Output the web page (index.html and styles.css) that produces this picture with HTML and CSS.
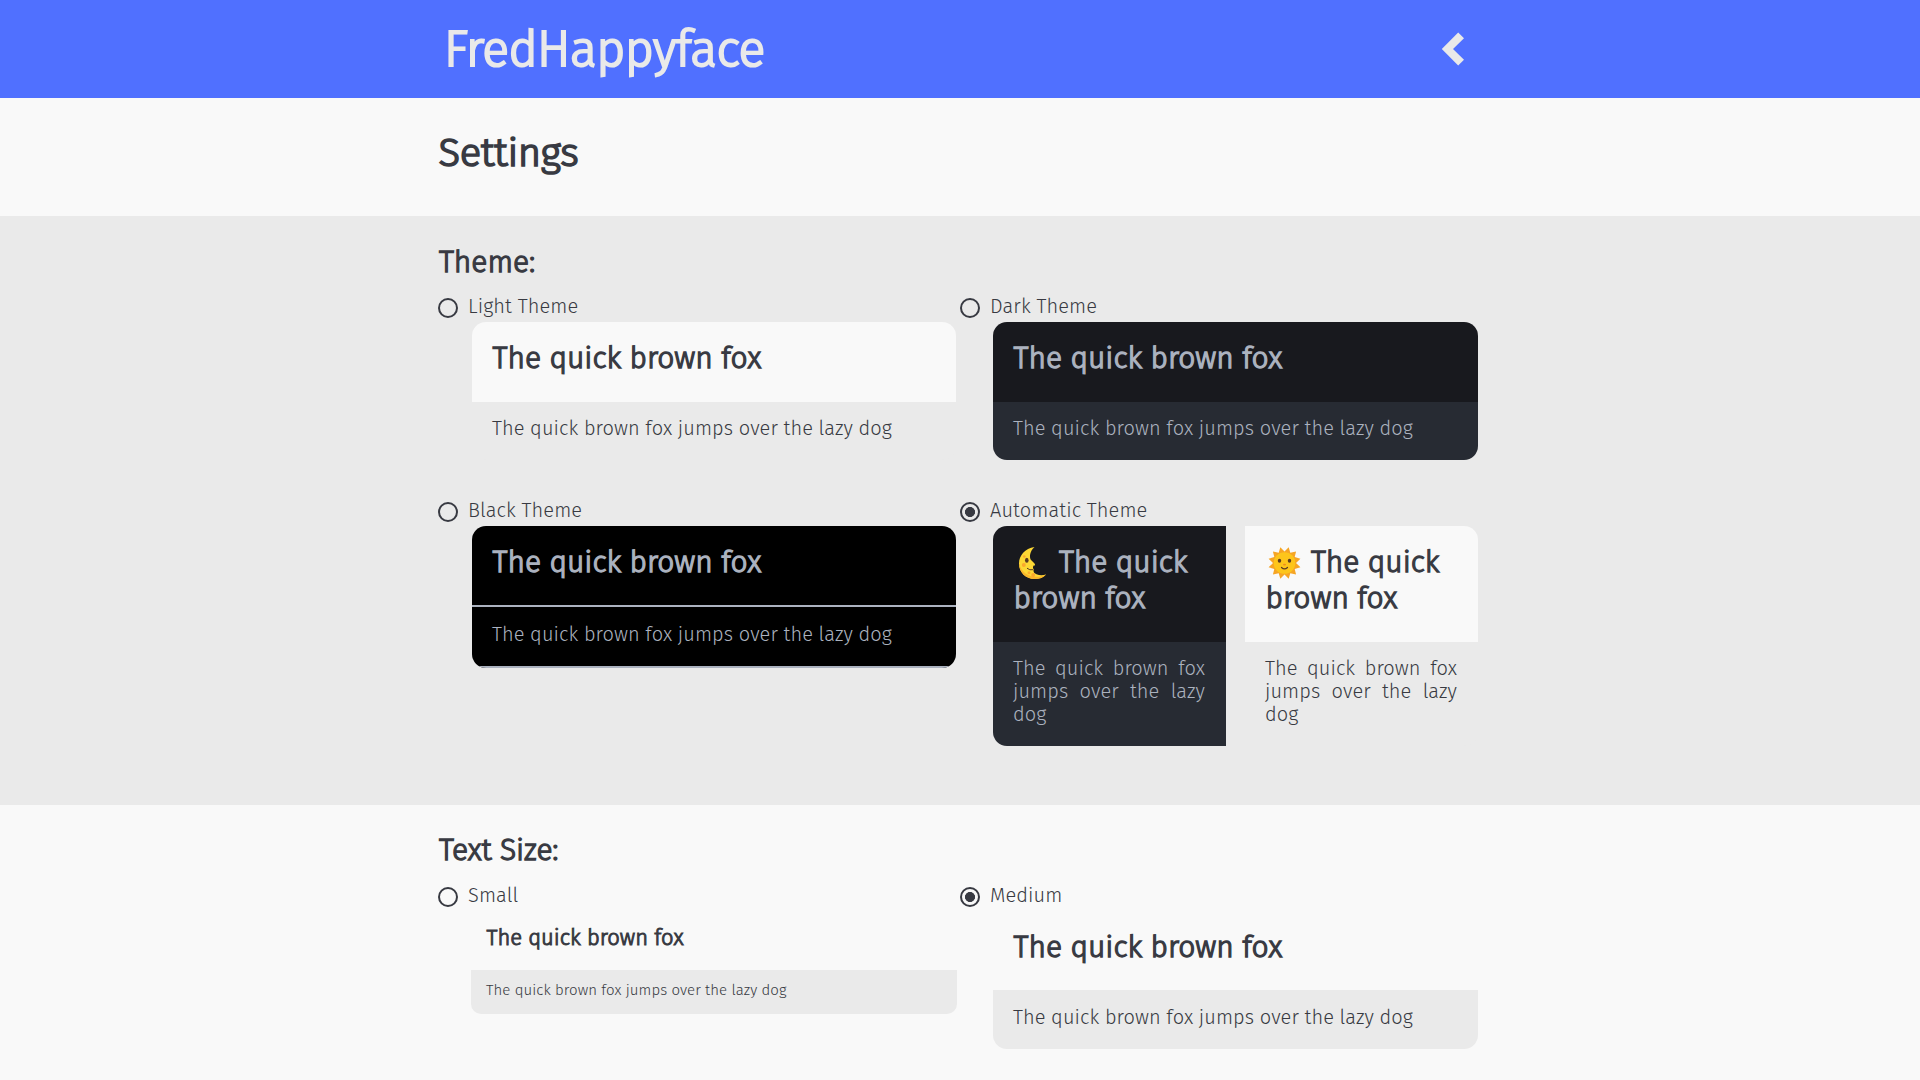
FILE: index.html
```html
<!DOCTYPE html>
<html lang="en">
<head>
<meta charset="utf-8">
<title>Settings - FredHappyface</title>
<link rel="stylesheet" href="styles.css">
</head>
<body>
<header class="topbar">
  <div class="container topbar-inner">
    <a class="brand">FredHappyface</a>
    <svg class="chevron" width="24" height="36" viewBox="0 0 24 36"><path d="M0.8 18 17.2 1.5 23 7.2 12 18 23 28.8 17.2 34.5Z"/></svg>
  </div>
</header>
<section class="section title-section">
  <div class="container"><h1>Settings</h1></div>
</section>
<section class="section alt theme-section">
  <div class="container">
    <h2>Theme:</h2>
    <div class="options">
      <div class="option">
        <label class="choice"><span class="radio"></span>Light Theme</label>
        <div class="card light">
          <div class="card-head">The quick brown fox</div>
          <p class="card-body">The quick brown fox jumps over the lazy dog</p>
        </div>
      </div>
      <div class="option">
        <label class="choice"><span class="radio"></span>Dark Theme</label>
        <div class="card dark">
          <div class="card-head">The quick brown fox</div>
          <p class="card-body">The quick brown fox jumps over the lazy dog</p>
        </div>
      </div>
      <div class="option">
        <label class="choice"><span class="radio"></span>Black Theme</label>
        <div class="card black">
          <div class="card-head">The quick brown fox</div>
          <p class="card-body">The quick brown fox jumps over the lazy dog</p>
        </div>
      </div>
      <div class="option">
        <label class="choice"><span class="radio checked"></span>Automatic Theme</label>
        <div class="split">
          <div class="card dark left">
            <div class="card-head"><svg class="emoji" width="37" height="36" viewBox="0 0 37 36">
                <path fill="#fdd835" d="M20.500 3C11 4.500 5 11.500 5 19.500C5 28.500 12 35 20.500 35C25.500 35 29.500 33.500 32 30.500C29 31.500 25.500 31.500 22.500 30.300C20.500 29.500 19.300 28 19.500 26.500C20 25.600 20 25 19 24.600C18.800 23.500 19 22.500 19.600 21.600C20.500 21.700 21.300 21.200 21 20.400C20.500 19 18.300 17.500 17 16C15.200 13.500 15.500 7.500 20.500 3Z"/>
                <path fill="#f9b52b" d="M5 19.500C5 28.500 12 35 20.500 35C25.500 35 29.500 33.500 32 30.500C21 36 8 31.500 5 19.500Z"/>
                <g fill="#fba92c"><circle cx="9.800" cy="21" r="2"/><circle cx="15" cy="28.800" r="1.500"/><circle cx="19.200" cy="31" r="2"/><circle cx="10.300" cy="12.500" r="1.300"/></g>
                <ellipse cx="12.800" cy="16.200" rx="1.800" ry="2.500" fill="#5a3b22"/>
                <path fill="none" stroke="#5a3b22" stroke-width="1" d="M13 24.200Q15.500 26.500 19.300 25.700"/>
              </svg> The quick brown fox</div>
            <p class="card-body">The quick brown fox jumps over the lazy dog</p>
          </div>
          <div class="card light right">
            <div class="card-head"><svg class="emoji" width="37" height="36" viewBox="0 0 37 36">
                <path fill="#f6a525" d="M18.500 7.500 22.700 3.200 24.300 8.800 30.100 7.400 28.700 13.100 34.400 14.700 30 19 34.400 23.300 28.700 24.900 30.100 30.600 24.300 29.200 22.700 34.800 18.500 30.500 14.300 34.800 12.700 29.200 6.900 30.600 8.300 24.900 2.600 23.300 7 19 2.600 14.700 8.300 13.100 6.900 7.400 12.700 8.800 14.300 3.200Z"/>
                <circle cx="18.500" cy="19" r="10.800" fill="#fdc51b"/>
                <ellipse cx="13.500" cy="16.700" rx="1.700" ry="2" fill="#5a3b22"/><ellipse cx="23.500" cy="16.700" rx="1.700" ry="2" fill="#5a3b22"/>
                <ellipse cx="18.500" cy="20.600" rx="1.500" ry=".9" fill="#ef8b1f"/>
                <path fill="none" stroke="#5a3b22" stroke-width="1.200" stroke-linecap="round" d="M15.500 23.500Q18.500 26.300 21.500 23.500"/>
              </svg> The quick brown fox</div>
            <p class="card-body">The quick brown fox jumps over the lazy dog</p>
          </div>
        </div>
      </div>
    </div>
  </div>
</section>
<section class="section size-section">
  <div class="container">
    <h2>Text Size:</h2>
    <div class="options">
      <div class="option">
        <label class="choice"><span class="radio"></span>Small</label>
        <div class="card light small">
          <div class="card-head">The quick brown fox</div>
          <p class="card-body">The quick brown fox jumps over the lazy dog</p>
        </div>
      </div>
      <div class="option">
        <label class="choice"><span class="radio checked"></span>Medium</label>
        <div class="card light medium">
          <div class="card-head">The quick brown fox</div>
          <p class="card-body">The quick brown fox jumps over the lazy dog</p>
        </div>
      </div>
    </div>
  </div>
</section>
</body>
</html>
```
FILE: styles.css
```css
* { box-sizing: border-box; margin: 0; padding: 0; }

html { overflow: hidden; }

body {
  height: 1080px;
  overflow: hidden;
  background: #f9f9f9;
  color: #383a42;
  font-family: "Fira Sans", "Open Sans", sans-serif;
  font-size: 20px;
  font-weight: 300;
  line-height: 23px;
  letter-spacing: 0.06px;
}

.container { width: 1044px; margin: 0 auto; padding-right: 4px; }

.topbar { height: 98px; background: #5070ff; color: #e9e9e9; }
.topbar-inner { display: flex; justify-content: space-between; padding: 19px 17px 0 6px; }
.brand {
  font-size: 50px;
  line-height: 60px;
  letter-spacing: -0.6px;
  -webkit-text-stroke: 2.1px currentColor;
}
.chevron { margin-top: 11.5px; fill: #e9e9e9; }

h1, h2, .card-head { font-weight: 300; }
h1 { font-size: 40px; line-height: 48px; letter-spacing: -0.35px; -webkit-text-stroke: 1.7px currentColor; }
h2, .card-head { font-size: 30px; line-height: 36px; letter-spacing: 0; -webkit-text-stroke: 1.3px currentColor; }
h1 { padding-left: 0.5px; }
h2 { padding-left: 1px; }

.title-section { height: 118px; padding-top: 31px; }
.alt { background: #eaeaea; }
.theme-section { height: 589px; padding-top: 28px; }
.theme-section h2 { margin-bottom: 14px; }
.size-section { padding-top: 27px; }
.size-section h2 { margin-bottom: 15px; letter-spacing: -0.1px; }

.options { display: grid; grid-template-columns: 1fr 1fr; gap: 38px 4px; align-items: start; }
.choice { display: flex; height: 28px; line-height: 24px; gap: 10px; letter-spacing: 0.1px; }

.radio {
  width: 20px;
  height: 20px;
  margin-top: 4px;
  border: 2px solid #383a42;
  border-radius: 50%;
}
.radio.checked { background: radial-gradient(circle, #383a42 4.7px, transparent 5.3px); }

.card { margin-left: 34px; border-radius: 14px; overflow: hidden; }
.option:nth-child(even) > .card { margin-left: 33px; }
.card-head { padding: 18px 20px 26px 20.6px; }
.card-body { padding: 15px 20px 20px; text-align: justify; }

.light .card-head { background: #f9f9f9; }
.light .card-body { background: #eaeaea; }
.dark { color: #abb2bf; }
.dark .card-head { background: #18191e; }
.dark .card-body { background: #272b33; }
.black { background: #000; color: #abb2bf; }
.black .card-head { padding-bottom: 25px; border-bottom: 2px solid #abb2bf; }
.black .card-body { padding-top: 16px; border-bottom: 2px solid #abb2bf; }

.split { display: grid; grid-template-columns: 1fr 1fr; gap: 19px; margin-left: 33px; }
.split .card { margin-left: 0; }
.split .card-body { padding-right: 21px; }
.split .left { border-radius: 14px 0 0 14px; }
.split .right { border-radius: 0 14px 14px 0; }
.emoji { vertical-align: top; }

.medium .card-head { padding-bottom: 25px; }
.medium .card-body { padding-top: 16px; }
.small { margin: 0 -1px 0 33px; border-radius: 10px; }
.small .card-head { padding: 13px 15px 19px 15.5px; font-size: 22px; line-height: 27px; -webkit-text-stroke-width: 1px; }
.small .card-body { padding: 11px 15px 15px; font-size: 15px; line-height: 18px; letter-spacing: 0.06px; }
```
